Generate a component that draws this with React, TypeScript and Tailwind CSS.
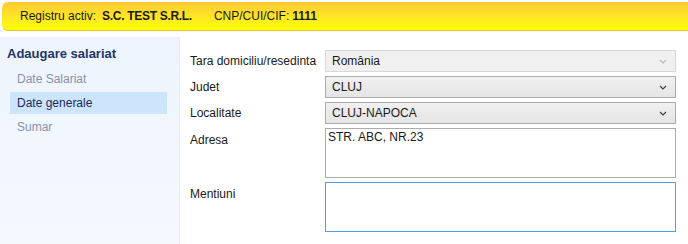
import React from 'react';

function Chevron({ disabled }: { disabled?: boolean }) {
  return (
    <svg width="8" height="5" viewBox="0 0 8 5" className="shrink-0">
      <path d="M1 1 L4 4 L7 1" fill="none" stroke={disabled ? '#b8b8b8' : '#404040'} strokeWidth="1.2" />
    </svg>
  );
}

function Select({ value, disabled }: { value: string; disabled?: boolean }) {
  return (
    <div
      className={`flex h-[22px] items-center justify-between border pl-[6px] pr-[8px] ${
        disabled
          ? 'border-[#d9d9d9] bg-[#f0f0f0]'
          : 'border-[#acacac] bg-gradient-to-b from-[#f0f0f0] to-[#e5e5e5]'
      }`}
    >
      <span className="text-[12px] text-[#1a1a1a]">{value}</span>
      <Chevron disabled={disabled} />
    </div>
  );
}

export default function App() {
  return (
    <div className="flex h-[244px] w-[688px] flex-col overflow-hidden bg-white font-['Liberation_Sans',sans-serif]">
      {/* registru activ */}
      <div className="pl-[2px] pt-[2px]">
        <div className="flex h-[29px] items-center rounded-tl-[6px] rounded-bl-[6px] border-b border-[#eec21e] bg-gradient-to-b from-[#ffc932] to-[#ffff00] pl-[18px] text-[12px] text-[#1a1a1a]">
          <span>Registru activ:</span>
          <span className="ml-[6px] font-bold tracking-[-0.3px]">S.C. TEST S.R.L.</span>
          <span className="ml-[22px]">CNP/CUI/CIF:</span>
          <span className="ml-[3px] font-bold">1111</span>
        </div>
      </div>

      <div className="mt-[6px] flex flex-1">
        {/* sidebar */}
        <div className="w-[180px] shrink-0 border-r border-[#ececec] bg-gradient-to-b from-[#edf4fd] to-[#f5f9fe] pt-[7px]">
          <div className="pl-[7px] text-[13px] font-bold text-[#1f3567]">Adaugare salariat</div>
          <div className="mt-[4px] flex flex-col gap-[2px]">
            <div className="flex h-[22px] items-center pl-[17px] text-[12px] text-[#8b90a8]">Date Salariat</div>
            <div className="ml-[10px] mr-[12px] flex h-[22px] items-center bg-[#cce4fc] pl-[7px] text-[12px] text-[#1c2a5a]">
              Date generale
            </div>
            <div className="flex h-[22px] items-center pl-[17px] text-[12px] text-[#8b90a8]">Sumar</div>
          </div>
        </div>

        {/* form */}
        <div className="flex-1 pt-[13px] pr-[12px]">
          <div className="grid grid-cols-[135px_1fr] gap-y-[4px] pl-[10px]">
            <div className="flex h-[22px] items-center text-[12px] text-[#1a1a1a]">Tara domiciliu/resedinta</div>
            <Select value="România" disabled />
            <div className="flex h-[22px] items-center text-[12px] text-[#1a1a1a]">Judet</div>
            <Select value="CLUJ" />
            <div className="flex h-[22px] items-center text-[12px] text-[#1a1a1a]">Localitate</div>
            <Select value="CLUJ-NAPOCA" />
            <div className="pt-[3px] text-[12px] text-[#1a1a1a]">Adresa</div>
            <div className="h-[50px] border border-[#acacac] bg-white px-[2px] text-[12px] leading-[16px] text-[#1a1a1a]">
              STR. ABC, NR.23
            </div>
            <div className="pt-[3px] text-[12px] text-[#1a1a1a]">Mentiuni</div>
            <div className="h-[50px] border border-[#569de5] bg-white"></div>
          </div>
        </div>
      </div>
    </div>
  );
}
